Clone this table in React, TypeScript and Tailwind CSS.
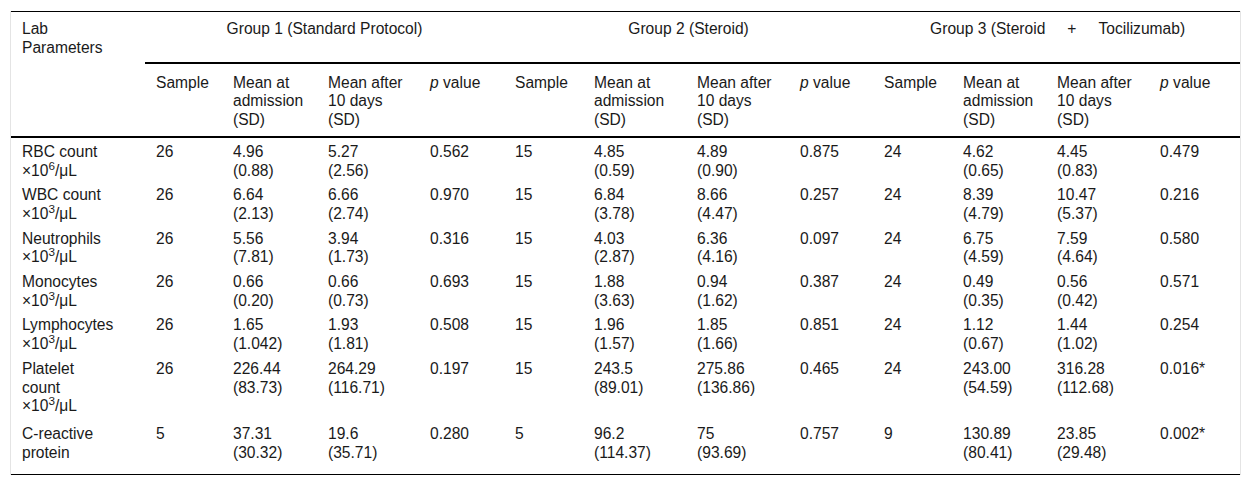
import React from 'react';

type Group = [string, string, string, string, string, string];

interface Row {
  label: React.ReactNode[];
  groups: Group[];
  pad: string;
}

const unit = (exp: string) => (
  <>
    ×10<sup>{exp}</sup>/μL
  </>
);

const rows: Row[] = [
  {
    label: ['RBC count', unit('6')],
    pad: 'pt-[5px] pb-[3px]',
    groups: [
      ['26', '4.96', '(0.88)', '5.27', '(2.56)', '0.562'],
      ['15', '4.85', '(0.59)', '4.89', '(0.90)', '0.875'],
      ['24', '4.62', '(0.65)', '4.45', '(0.83)', '0.479'],
    ],
  },
  {
    label: ['WBC count', unit('3')],
    pad: 'pt-[3px] pb-[3px]',
    groups: [
      ['26', '6.64', '(2.13)', '6.66', '(2.74)', '0.970'],
      ['15', '6.84', '(3.78)', '8.66', '(4.47)', '0.257'],
      ['24', '8.39', '(4.79)', '10.47', '(5.37)', '0.216'],
    ],
  },
  {
    label: ['Neutrophils', unit('3')],
    pad: 'pt-[3px] pb-[3px]',
    groups: [
      ['26', '5.56', '(7.81)', '3.94', '(1.73)', '0.316'],
      ['15', '4.03', '(2.87)', '6.36', '(4.16)', '0.097'],
      ['24', '6.75', '(4.59)', '7.59', '(4.64)', '0.580'],
    ],
  },
  {
    label: ['Monocytes', unit('3')],
    pad: 'pt-[3px] pb-[3px]',
    groups: [
      ['26', '0.66', '(0.20)', '0.66', '(0.73)', '0.693'],
      ['15', '1.88', '(3.63)', '0.94', '(1.62)', '0.387'],
      ['24', '0.49', '(0.35)', '0.56', '(0.42)', '0.571'],
    ],
  },
  {
    label: ['Lymphocytes', unit('3')],
    pad: 'pt-[3px] pb-[3px]',
    groups: [
      ['26', '1.65', '(1.042)', '1.93', '(1.81)', '0.508'],
      ['15', '1.96', '(1.57)', '1.85', '(1.66)', '0.851'],
      ['24', '1.12', '(0.67)', '1.44', '(1.02)', '0.254'],
    ],
  },
  {
    label: ['Platelet', 'count', unit('3')],
    pad: 'pt-[3px] pb-[6px]',
    groups: [
      ['26', '226.44', '(83.73)', '264.29', '(116.71)', '0.197'],
      ['15', '243.5', '(89.01)', '275.86', '(136.86)', '0.465'],
      ['24', '243.00', '(54.59)', '316.28', '(112.68)', '0.016*'],
    ],
  },
  {
    label: ['C-reactive', 'protein'],
    pad: 'pt-[3px] pb-[12px]',
    groups: [
      ['5', '37.31', '(30.32)', '19.6', '(35.71)', '0.280'],
      ['5', '96.2', '(114.37)', '75', '(93.69)', '0.757'],
      ['9', '130.89', '(80.41)', '23.85', '(29.48)', '0.002*'],
    ],
  },
];

// column widths, left to right
const widths = [134, 77, 95, 102, 85, 79, 103, 103, 84, 79, 94, 103, 91];

const SubHead = () => (
  <>
    <th className="pl-[11px] pt-[10px] pb-[6px] align-top text-left font-normal border-b-2 border-black">Sample</th>
    <th className="pl-[11px] pt-[10px] pb-[6px] align-top text-left font-normal border-b-2 border-black">
      Mean at
      <br />
      admission
      <br />
      (SD)
    </th>
    <th className="pl-[11px] pt-[10px] pb-[6px] align-top text-left font-normal border-b-2 border-black">
      Mean after
      <br />
      10 days
      <br />
      (SD)
    </th>
    <th className="pl-[11px] pt-[10px] pb-[6px] align-top text-left font-normal border-b-2 border-black">
      <i>p</i> value
    </th>
  </>
);

export default function App() {
  return (
    <div className="bg-white w-[1251px] h-[485px] pt-[11px] font-['Liberation_Sans',Arial,sans-serif] text-[15.6px] leading-[18.7px] text-[#1a1a1a]">
      <div className="ml-[10px] w-[1231px] border-x border-[#e4e4e4]">
        <table className="table-fixed border-collapse w-[1229px] border-t border-b border-black">
          <colgroup>
            {widths.map((w, i) => (
              <col key={i} style={{ width: w }} />
            ))}
          </colgroup>
          <thead>
            <tr>
              <th rowSpan={2} className="pl-[11px] pt-[8px] align-top text-left font-normal border-b-2 border-black">
                Lab
                <br />
                Parameters
              </th>
              <th colSpan={4} className="pt-[8px] pb-[23px] align-top text-center font-normal border-b-2 border-black">
                Group 1 (Standard Protocol)
              </th>
              <th colSpan={4} className="pt-[8px] pb-[23px] align-top text-center font-normal border-b-2 border-black">
                Group 2 (Steroid)
              </th>
              <th colSpan={4} className="pt-[8px] pb-[23px] align-top font-normal border-b-2 border-black">
                <div className="flex justify-center gap-[22px] pl-[2px]">
                  <span>Group 3 (Steroid</span>
                  <span>+</span>
                  <span>Tocilizumab)</span>
                </div>
              </th>
            </tr>
            <tr>
              <SubHead />
              <SubHead />
              <SubHead />
            </tr>
          </thead>
          <tbody>
            {rows.map((r, ri) => (
              <tr key={ri}>
                <td className={`pl-[11px] align-top whitespace-nowrap ${r.pad}`}>
                  {r.label.map((l, li) => (
                    <div key={li}>{l}</div>
                  ))}
                </td>
                {r.groups.map((g, gi) => (
                  <React.Fragment key={gi}>
                    <td className={`pl-[11px] align-top ${r.pad}`}>{g[0]}</td>
                    <td className={`pl-[11px] align-top ${r.pad}`}>
                      {g[1]}
                      <br />
                      {g[2]}
                    </td>
                    <td className={`pl-[11px] align-top ${r.pad}`}>
                      {g[3]}
                      <br />
                      {g[4]}
                    </td>
                    <td className={`pl-[11px] align-top ${r.pad}`}>{g[5]}</td>
                  </React.Fragment>
                ))}
              </tr>
            ))}
          </tbody>
        </table>
      </div>
    </div>
  );
}
